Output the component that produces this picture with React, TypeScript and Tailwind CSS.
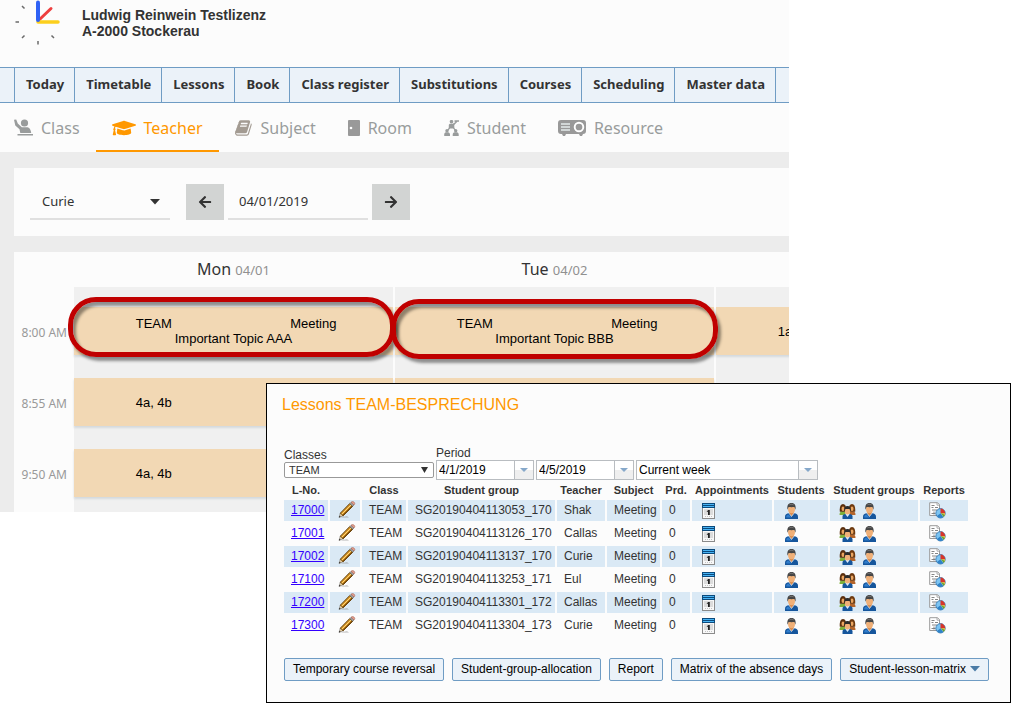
import type { ReactNode } from "react"
import { FaArrowLeft, FaArrowRight, FaGraduationCap } from "react-icons/fa"

const menuItems = [
  "Today",
  "Timetable",
  "Lessons",
  "Book",
  "Class register",
  "Substitutions",
  "Courses",
  "Scheduling",
  "Master data",
]

interface Lesson {
  id: string
  group: string
  teacher: string
}

const lessons: Lesson[] = [
  { id: "17000", group: "SG20190404113053_170", teacher: "Shak" },
  { id: "17001", group: "SG20190404113126_170", teacher: "Callas" },
  { id: "17002", group: "SG20190404113137_170", teacher: "Curie" },
  { id: "17100", group: "SG20190404113253_171", teacher: "Eul" },
  { id: "17200", group: "SG20190404113301_172", teacher: "Callas" },
  { id: "17300", group: "SG20190404113304_173", teacher: "Curie" },
]

/* ---------- icons ---------- */

function Logo() {
  return (
    <svg width="48" height="46" viewBox="0 0 48 46" className="shrink-0" fill="none" strokeLinecap="round">
      <g stroke="#6b6b6b" strokeWidth="1.500" strokeLinecap="butt">
        <path d="M8 6l2.500 2.500M1.500 22H5M8 38l2.500-2.500M24 41v3.500M37.500 35.500l2.500 2.500" />
      </g>
      <path d="M25 20L37 8.500" stroke="#ee3f3f" strokeWidth="3" />
      <path d="M24 22h20" stroke="#fccf1d" strokeWidth="3.500" />
      <path d="M24 20V2.500" stroke="#2f62f5" strokeWidth="4" />
    </svg>
  )
}

function ClassIcon() {
  return (
    <svg width="19" height="17" viewBox="0 0 19 17" fill="currentColor">
      <circle cx="10.500" cy="4" r="3.600" />
      <path d="M0 .8L2.200.5 3.800 4.500l4 3.700h4.700c2.600 0 4.300 1.700 4.700 5.800H6.300L5.500 10.200 1.300 6.500z" />
      <path d="M3.500 15h15.500v1.500H3.500z" />
    </svg>
  )
}

function BookIcon() {
  return (
    <svg width="18" height="18" viewBox="0 0 1792 1792" fill="currentColor" className="text-[#a39b92]">
      <path d="M1639 478q40 57 18 129l-275 906q-19 64-76.500 107.500t-122.500 43.500h-923q-77 0-148.500-53.500t-99.500-131.500q-24-67-2-127 0-4 3-27t4-37q1-8-3-21.500t-3-19.500q2-11 8-21t16.500-23.500 16.500-23.500q23-38 45-91.500t30-91.500q3-10 .5-30t-.5-28q3-11 17-28t17-23q21-36 42-92t25-90q1-9-2.500-32t.5-28q4-13 22-30.500t22-22.500q19-26 42.500-84.500t27.500-96.500q1-8-3-25.500t-2-26.500q2-8 9-18t18-23 17-21q8-12 16.500-30.500t15-35 16-36 19.500-32 26.500-23.500 36-11.500 47.500 5.500l-1 3q38-9 51-9h761q74 0 114 56t18 130l-274 906q-36 119-71.500 153.500t-128.500 34.500h-869q-27 0-38 15-11 16-1 43 24 70 144 70h923q29 0 56-15.500t35-41.500l300-987q7-22 5-57 38 15 59 43zm-1064 2q-4 13 2 22.500t20 9.500h608q13 0 25.500-9.500t16.500-22.500l21-64q4-13-2-22.500t-20-9.500h-608q-13 0-25.500 9.500t-16.500 22.500zm-83 256q-4 13 2 22.500t20 9.500h608q13 0 25.500-9.500t16.500-22.500l21-64q4-13-2-22.500t-20-9.500h-608q-13 0-25.500 9.500t-16.500 22.500z" />
    </svg>
  )
}

function DoorIcon() {
  return (
    <svg width="12" height="16" viewBox="0 0 12 16">
      <rect width="12" height="16" rx="1" fill="#999" />
      <circle cx="3" cy="8" r="1.300" fill="#fff" />
    </svg>
  )
}

function StudentIcon() {
  return (
    <svg width="15" height="16" viewBox="0 0 15 16" fill="currentColor">
      <circle cx="7.500" cy="1.700" r="1.800" />
      <path d="M4.800 8.500V5.200c0-1 .7-1.500 1.700-1.500h2.300L11.500 2l-1-.3V.3H15v1.400h-1.600L10.300 5v3.500z" />
      <path d="M5 7.500l1.200.7-2 2.500-1-.5zM10 7.500l-1 .7 2 2.500 1-.5z" />
      <circle cx="3" cy="10.800" r="1.700" />
      <circle cx="11.700" cy="10.800" r="1.700" />
      <path d="M.2 16v-1.500c0-1.600 1-2.200 2.800-2.200s3 .6 3 2.200V16zM8.700 16v-1.500c0-1.600 1-2.200 3-2.200s3 .6 3 2.200V16z" />
    </svg>
  )
}

function ProjectorIcon() {
  return (
    <svg width="28" height="16" viewBox="0 0 28 16">
      <path d="M3 0h22a3 3 0 013 3v8a3 3 0 01-3 3l-1 2h-2l-1-2H8l-1 2H5l-1-2H3a3 3 0 01-3-3V3a3 3 0 013-3z" fill="#999" />
      <path d="M3 4h9M3 7h9M3 10h9" stroke="#e4eaea" strokeWidth="1.300" />
      <circle cx="21" cy="7" r="4.300" fill="#999" stroke="#fff" strokeWidth="1.900" />
    </svg>
  )
}

function PencilIcon() {
  return (
    <svg width="18" height="18" viewBox="0 0 18 18">
      <path d="M2 16.500h9l-2-1.200z" fill="#8a8a8a" opacity=".6" />
      <path d="M1 16.500l1.300-4.300 2.900 2.600z" fill="#e8cda0" stroke="#777" strokeWidth=".6" />
      <path d="M1 16.500l.5-1.700 1.200 1z" fill="#222" />
      <path d="M2.300 12.200L11.800 2.500l3 2.700-9.600 9.600z" fill="#d99422" stroke="#5e4010" strokeWidth="1" />
      <path d="M3.700 13.300l9.500-9.500" stroke="#ffd67a" strokeWidth="1" />
      <path d="M4.900 14.400l9.500-9.500" stroke="#7a4c0c" strokeWidth="1.200" />
      <path d="M11.800 2.500l1.200-1.200 3 2.700-1.200 1.200z" fill="#a8adb3" stroke="#555" strokeWidth=".5" />
      <path d="M13 1.300c1-1 2.400-.8 3.200 0s.8 1.900-.2 2.700z" fill="#e8a090" stroke="#a0604f" strokeWidth=".6" />
    </svg>
  )
}

function CalendarIcon() {
  return (
    <svg width="13" height="16" viewBox="0 0 13 16">
      <rect x=".5" y=".5" width="12" height="15" fill="#f8f8f8" stroke="#8b8b8b" />
      <path d="M0 0h13v5H0z" fill="#0c4a7c" />
      <path d="M1 1h11v1H1zM1 3h11v1H1z" fill="#48b4f5" />
      <path d="M2 6h9v6H2z" fill="#dcdcdc" />
      <path d="M4.800 8.300l1.500-1.300h1.500v5H6V8.800H4.800z" fill="#222" />
      <path d="M3 13.500h7" stroke="#c4c4c4" strokeDasharray="1 1" />
    </svg>
  )
}

function PersonIcon() {
  return (
    <svg width="15" height="16" viewBox="0 0 15 16">
      <path d="M1 16v-2.500c0-2 1.500-3 4-3.300h5c2.500.3 4 1.300 4 3.300V16z" fill="#16569c" />
      <path d="M2.300 14.500v-1.300c.2-1 1-1.600 2.200-1.800l3 3.100z" fill="#2f7ccb" />
      <path d="M5.200 9h4.600v1.500l-2.300 3-2.300-3z" fill="#d98b4c" />
      <path d="M5 10.200l2.500 3.300 2.500-3.300" stroke="#cfe4fa" strokeWidth=".8" fill="none" />
      <ellipse cx="7.500" cy="6" rx="3.500" ry="4.300" fill="#f0b078" />
      <path d="M3.500 6.800C2.800 2.500 4.200 0 7.500 0s4.700 2.500 4 6.800L10.400 4C8.500 4.200 6.700 4.200 4.600 4z" fill="#454545" />
      <path d="M5.500 1.800c1-.7 2.800-.7 4 0" stroke="#8a8a8a" strokeWidth=".8" fill="none" />
    </svg>
  )
}

function GroupIcon() {
  return (
    <svg width="17" height="16" viewBox="0 0 17 16">
      <path d="M.5 12c0-2.500 1-3.500 3-3.700h3V12z" fill="#7fb03a" />
      <path d="M16.500 12c0-2.500-1-3.500-3-3.700h-3V12z" fill="#b5652a" />
      <path d="M.8 8.800c-.4-5 .7-7.800 3.200-7.800s3.500 2.800 3.200 7.800z" fill="#5a2f0e" />
      <path d="M9.800 8.800c-.4-5 .7-7.800 3.200-7.800s3.500 2.800 3.200 7.800z" fill="#6e3a10" />
      <ellipse cx="4" cy="5.800" rx="1.500" ry="2.300" fill="#eba661" />
      <ellipse cx="13" cy="5.800" rx="1.500" ry="2.300" fill="#eba661" />
      <path d="M3.500 16v-2.500c0-1.500 1-2.300 3-2.500h4c2 .2 3 1 3 2.500V16z" fill="#16569c" />
      <path d="M6.700 10.500h3.600v1l-1.800 2.500-1.800-2.500z" fill="#dcecfb" />
      <ellipse cx="8.500" cy="8.200" rx="2.600" ry="3.300" fill="#f0b078" />
      <path d="M5.300 8.500c-.5-3.700.5-5.500 3.200-5.500s3.700 1.800 3.200 5.500l-1-2.500H6.300z" fill="#2b2b2b" />
    </svg>
  )
}

function ReportIcon() {
  return (
    <svg width="17" height="17" viewBox="0 0 17 17">
      <path d="M.7.700h7.800l2 2v10.800H.7z" fill="#fff" stroke="#9a9a9a" />
      <path d="M8 .7v2.500h2.500" fill="none" stroke="#9a9a9a" strokeWidth=".8" />
      <path d="M2.500 3.500h3M2.500 5.500h2M6 5.500h3M3 8h5M5 9.500v3M2.500 11.500h4" stroke="#777" strokeWidth=".9" />
      <circle cx="11.500" cy="11.300" r="4.700" fill="#7cc4f2" stroke="#2a6ba6" strokeWidth=".8" />
      <path d="M11.500 11.300V6.600a4.700 4.700 0 014.700 4.700z" fill="#d8352a" />
      <path d="M11.500 11.300h4.700a4.700 4.700 0 01-1.500 3.400z" fill="#f2b82e" />
      <path d="M12 11l2.700 3.800 1-1.800z" fill="#52a63c" />
      <path d="M8 14a4.700 4.700 0 006.200 1.100l-2.700-3.800z" fill="#2f83c9" />
    </svg>
  )
}

function Triangle({ className }: { className: string }) {
  return (
    <svg width="10" height="6" viewBox="0 0 10 6" fill="currentColor" className={className}>
      <path d="M0 0h10L5 5.500z" />
    </svg>
  )
}

/* ---------- timetable ---------- */

interface TabProps {
  icon: ReactNode
  label: string
  active?: boolean
}

function Tab({ icon, label, active }: TabProps) {
  return (
    <button
      className={`flex items-center gap-2 border-b-2 px-4 pt-0.5 ${
        active ? "border-[#ff9800] text-[#ff9800]" : "border-transparent text-[#999c9c]"
      }`}
    >
      {icon}
      {label}
    </button>
  )
}

function DayHeader({ day, date }: { day: string; date: string }) {
  return (
    <div className="h-[35px] w-[319px] shrink-0 text-center text-base leading-[35px] text-[#333]">
      {day} <span className="text-[13px] text-[#909090]">{date}</span>
    </div>
  )
}

function Slot({ children }: { children: ReactNode }) {
  return (
    <div className="relative grid h-12 grid-cols-2 content-center bg-[#f2d8b4] text-center leading-[15px] shadow-[0_2px_2px_#d5dade]">
      {children}
    </div>
  )
}

// red ring drawn over a highlighted lesson
function Marker({ className }: { className: string }) {
  return (
    <div
      className={`pointer-events-none absolute z-10 rounded-[28px] border-[5px] border-[#c00000] shadow-[3px_4px_3px_#00000068,inset_3px_4px_3px_#00000068] ${className}`}
    />
  )
}

function DayColumn({ children }: { children?: ReactNode }) {
  return <div className="flex w-[319px] shrink-0 flex-col gap-[23px] bg-[#f0f0f0] pt-5">{children}</div>
}

function Timetable() {
  return (
    <section className="ml-3.5 h-[260px] overflow-hidden bg-[#fcfcfc]">
      <div className="flex gap-0.5 pl-[60px]">
        <DayHeader day="Mon" date="04/01" />
        <DayHeader day="Tue" date="04/02" />
      </div>
      <div className="flex h-[225px]">
        <div className="flex w-[60px] shrink-0 flex-col gap-[23px] pt-5 text-xs text-[#999]">
          {["8:00 AM", "8:55 AM", "9:50 AM"].map((time) => (
            <div key={time} className="flex h-12 items-center justify-end pt-1 pr-[7px] whitespace-nowrap">
              {time}
            </div>
          ))}
        </div>
        <div className="flex gap-0.5 font-['Liberation_Sans',Arial,sans-serif] text-[13px] text-black">
          <DayColumn>
            <Slot>
              <span>TEAM</span>
              <span>Meeting</span>
              <span className="col-span-2">Important Topic AAA</span>
              <Marker className="-top-2.5 -right-0.5 -bottom-0.5 -left-1.5" />
            </Slot>
            <Slot>
              <span>4a, 4b</span>
            </Slot>
            <Slot>
              <span>4a, 4b</span>
            </Slot>
          </DayColumn>
          <DayColumn>
            <Slot>
              <span>TEAM</span>
              <span>Meeting</span>
              <span className="col-span-2">Important Topic BBB</span>
              <Marker className="-top-2 -right-1 -bottom-1 -left-1" />
            </Slot>
            <Slot>{null}</Slot>
          </DayColumn>
          <DayColumn>
            <Slot>
              <span>1a, 1b</span>
            </Slot>
          </DayColumn>
        </div>
      </div>
    </section>
  )
}

function Filters() {
  return (
    <section className="my-4 ml-3.5 flex items-stretch bg-[#fcfcfc] p-4 text-[13px] text-[#333]">
      <div className="relative mr-4 flex h-9 w-[140px]">
        <select
          aria-label="Teacher"
          className="w-full appearance-none border-b-2 border-[#e0e0e0] bg-transparent pt-0.5 pl-3 outline-none"
        >
          <option>Curie</option>
        </select>
        <Triangle className="pointer-events-none absolute top-[15px] right-2.5" />
      </div>
      <button aria-label="Previous week" className="flex w-[38px] items-center justify-center bg-[#d2d4d3]">
        <FaArrowLeft size={14} />
      </button>
      <input
        aria-label="Date"
        defaultValue="04/01/2019"
        className="mx-1 w-[140px] border-b-2 border-[#e0e0e0] bg-transparent pt-0.5 pl-[11px] outline-none"
      />
      <button aria-label="Next week" className="flex w-[38px] items-center justify-center bg-[#d2d4d3]">
        <FaArrowRight size={14} />
      </button>
    </section>
  )
}

/* ---------- lessons window ---------- */

function ComboBox({ label, value, className }: { label: string; value: string; className: string }) {
  return (
    <div className={`flex h-5 border border-[#b9bdc1] bg-white ${className}`}>
      <input aria-label={label} defaultValue={value} className="min-w-0 flex-1 pl-0.5 text-black outline-none" />
      <button
        aria-label={`Open ${label}`}
        className="flex w-[19px] items-center justify-center border-l border-[#b9bdc1] bg-linear-to-b from-white from-50% to-[#efefef] to-50%"
      >
        <svg width="8" height="4" viewBox="0 0 8 4" fill="#86a8ca">
          <path d="M0 0h8L4 4z" />
        </svg>
      </button>
    </div>
  )
}

function ActionButton({ children }: { children: ReactNode }) {
  return (
    <button className="flex h-[23px] items-center gap-1.5 rounded-xs border border-[#6f9cc4] bg-[#ebf2f9] px-2 pb-0.5 whitespace-nowrap text-black">
      {children}
    </button>
  )
}

function LessonRow({ lesson, index }: { lesson: Lesson; index: number }) {
  const shade = index % 2 === 0 ? "bg-[#dae9f5]" : ""
  return (
    <tr className="h-[21px] *:p-0 *:pb-0.5 *:pl-[7px]">
      <td className={shade}>
        <a href="#" className="text-[#3300ff] underline">
          {lesson.id}
        </a>
      </td>
      <td className={shade}>
        <div className="pl-px">
          <PencilIcon />
        </div>
      </td>
      <td className={shade}>TEAM</td>
      <td className={shade}>{lesson.group}</td>
      <td className={shade}>{lesson.teacher}</td>
      <td className={shade}>Meeting</td>
      <td className={shade}>0</td>
      <td className={shade}>
        <div className="pt-0.5 pl-[3px]">
          <CalendarIcon />
        </div>
      </td>
      <td className={shade}>
        <div className="pt-0.5 pl-[3px]">
          <PersonIcon />
        </div>
      </td>
      <td className={shade}>
        <div className="flex gap-1.5 pt-0.5 pl-0.5">
          <GroupIcon />
          <PersonIcon />
        </div>
      </td>
      <td className={shade}>
        <div className="pt-0.5 pl-0.5">
          <ReportIcon />
        </div>
      </td>
    </tr>
  )
}

function LessonsWindow() {
  return (
    <div className="absolute top-[383px] right-0 left-[266px] z-20 border border-black bg-[#fcfcfc] px-[15px] pb-[21px] font-['Liberation_Sans',Arial,sans-serif] text-xs text-[#333]">
      <h1 className="pt-[11px] text-base leading-5 text-[#ff9800]">Lessons TEAM-BESPRECHUNG</h1>
      <div className="mt-8 flex items-end gap-0.5 pl-0.5 leading-[13px]">
        <div className="mb-0.5 flex w-[150px] flex-col">
          <label htmlFor="classes">Classes</label>
          <div className="relative flex">
            <select
              id="classes"
              className="h-4 w-full appearance-none rounded-xs border border-[#999] bg-white pl-1 text-[11px] leading-none outline-none"
            >
              <option>TEAM</option>
            </select>
            <svg width="7" height="6" viewBox="0 0 7 6" className="pointer-events-none absolute top-[5px] right-1.5" fill="#333">
              <path d="M0 0h7L3.500 6z" />
            </svg>
          </div>
        </div>
        <div>
          <div>Period</div>
          <div className="flex gap-0.5">
            <ComboBox label="Period start" value="4/1/2019" className="w-[98px]" />
            <ComboBox label="Period end" value="4/5/2019" className="w-[98px]" />
            <ComboBox label="Period range" value="Current week" className="w-[182px]" />
          </div>
        </div>
      </div>

      <table className="w-[688px] table-fixed border-separate border-spacing-0.5">
        <colgroup>
          <col className="w-[44px]" />
          <col className="w-[30px]" />
          <col className="w-[44px]" />
          <col className="w-[147px]" />
          <col className="w-[48px]" />
          <col className="w-[53px]" />
          <col className="w-[28px]" />
          <col className="w-[80px]" />
          <col className="w-[54px]" />
          <col className="w-[88px]" />
          <col className="w-[48px]" />
        </colgroup>
        <thead>
          <tr className="h-4 text-[11px] leading-4 whitespace-nowrap *:p-0">
            <th>L-No.</th>
            <th />
            <th>Class</th>
            <th>Student group</th>
            <th>Teacher</th>
            <th>Subject</th>
            <th>Prd.</th>
            <th>Appointments</th>
            <th>Students</th>
            <th>Student groups</th>
            <th>Reports</th>
          </tr>
        </thead>
        <tbody>
          {lessons.map((lesson, i) => (
            <LessonRow key={lesson.id} lesson={lesson} index={i} />
          ))}
        </tbody>
      </table>

      <div className="mt-5 flex gap-2 pl-0.5">
        <ActionButton>Temporary course reversal</ActionButton>
        <ActionButton>Student-group-allocation</ActionButton>
        <ActionButton>Report</ActionButton>
        <ActionButton>Matrix of the absence days</ActionButton>
        <ActionButton>
          Student-lesson-matrix
          <Triangle className="-ml-0.5 text-[#4a7ba6]" />
        </ActionButton>
      </div>
    </div>
  )
}

export default function App() {
  return (
    <div className="relative min-h-screen overflow-hidden bg-white font-['Noto_Sans','Open_Sans',sans-serif]">
      <div className="mr-[222px] overflow-hidden bg-[#ececec]">
        <header className="flex h-[67px] gap-5 bg-[#fcfcfc] pl-3.5">
          <Logo />
          <p className="pt-[7px] font-['Liberation_Sans',Arial,sans-serif] text-sm leading-4 font-bold text-[#333]">
            Ludwig Reinwein Testlizenz
            <br />
            A-2000 Stockerau
          </p>
        </header>
        <nav className="flex h-9 border-y border-[#6f9cc4] bg-[#ebf2f9] pl-3.5 text-[13px] font-bold text-[#333]">
          {menuItems.map((item) => (
            <a key={item} href="#" className="flex items-center border-l border-[#6f9cc4] pr-2.5 pl-[11px] whitespace-nowrap last:border-r">
              {item}
            </a>
          ))}
        </nav>
        <div className="flex h-[49px] bg-[#fcfcfc]">
          <div className="-ml-0.5 flex">
            <Tab icon={<ClassIcon />} label="Class" />
            <Tab icon={<FaGraduationCap size={24} />} label="Teacher" active />
            <Tab icon={<BookIcon />} label="Subject" />
            <Tab icon={<DoorIcon />} label="Room" />
            <Tab icon={<StudentIcon />} label="Student" />
            <Tab icon={<ProjectorIcon />} label="Resource" />
          </div>
        </div>
        <Filters />
        <Timetable />
      </div>
      <LessonsWindow />
    </div>
  )
}
